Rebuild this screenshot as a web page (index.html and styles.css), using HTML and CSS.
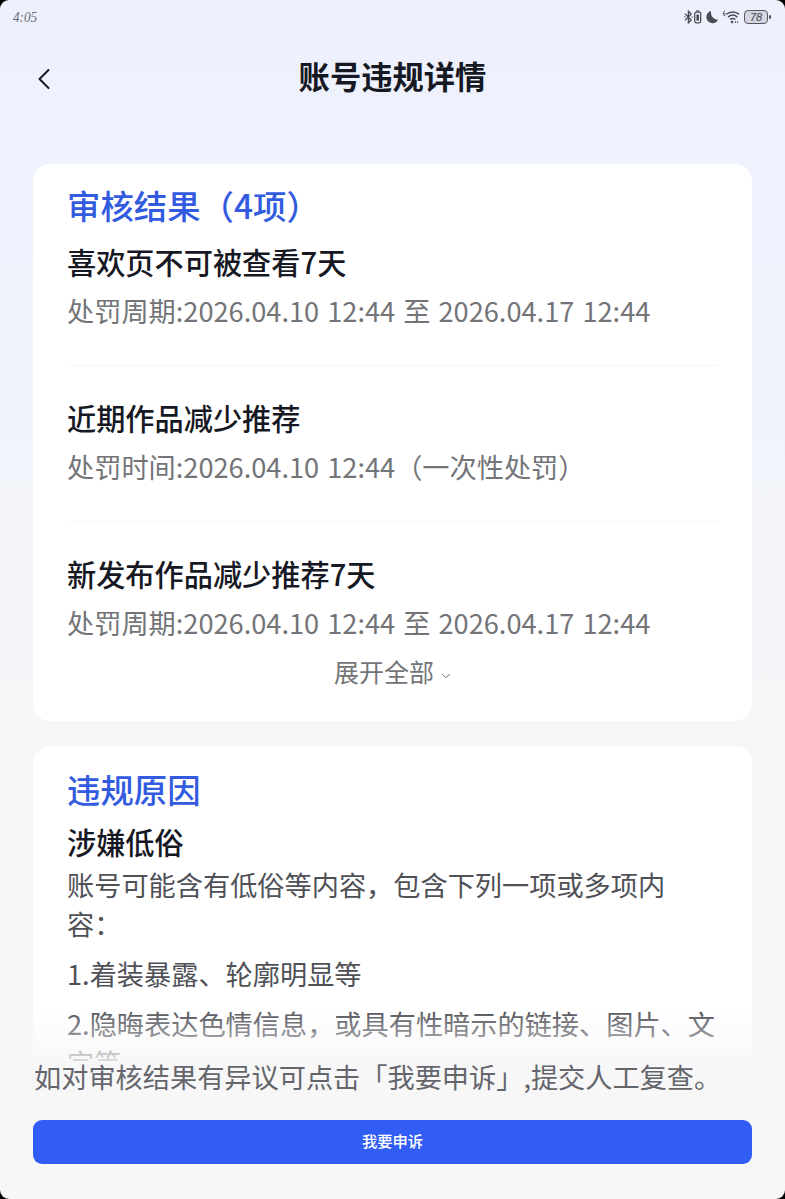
FILE: index.html
```html
<!DOCTYPE html>
<html lang="zh-CN">
  <head>
    <title>账号违规详情</title>
    <meta charset="UTF-8" />
    <link rel="stylesheet" href="styles.css">
  </head>

  <body>
    <div class="page">
      <div class="status-bar">
        <div class="time">4:05</div>
        <div class="status-icons">
          <svg class="bluetooth" width="19" height="14" viewBox="0 0 19 14">
            <path d="M1 3.6 L7.2 10 L4.4 12.8 V1.2 L7.2 4 L1 10.4" />
            <path d="M0.4 7h1M7.6 7h1" />
            <rect x="10.7" y="2.2" width="6" height="10.6" rx="1.5" />
            <path d="M12.2 1h3" />
            <rect class="fill" x="12.4" y="4.6" width="2.6" height="6" />
          </svg>
          <svg class="moon" width="13" height="14" viewBox="0 0 13 14">
            <path d="M5 1 A6.2 6.2 0 1 0 12.2 9.6 C8.2 10.2 4.2 6.2 5 1 Z" />
          </svg>
          <svg class="wifi" width="18" height="14" viewBox="0 0 18 14">
            <path d="M3.2 0.6 C1.2 1.4 0.7 5.6 2.2 5.6 C3.6 5.6 3.6 3.2 2.2 3.2 C1.6 3.2 1.2 3.6 1.1 4" stroke-width="0.9" />
            <path d="M4.2 4.3 C8 1.1 13.4 1.1 17.2 4.3M6 7.1 C8.8 4.7 12.6 4.7 15.4 7.1M8 9.5 C9.8 8.1 11.6 8.1 13.4 9.5" />
            <circle cx="10" cy="12" r="1.3" />
            <path d="M12.8 12h1.2M15 12h1.2" />
          </svg>
          <div class="battery">78</div>
          <div class="battery-tip"></div>
        </div>
      </div>

      <div class="header">
        <svg class="back" width="14" height="22" viewBox="0 0 14 22">
          <path d="M11.5 2 L2.5 11 L11.5 20" />
        </svg>
        <h1 class="title">账号违规详情</h1>
      </div>

      <div class="content">
        <div class="card result">
          <h2 class="card-title">审核结果（4项）</h2>
          <div class="item">
            <div class="item-title">喜欢页不可被查看7天</div>
            <div class="item-time">处罚周期:2026.04.10 12:44 至 2026.04.17 12:44</div>
          </div>
          <div class="item">
            <div class="item-title">近期作品减少推荐</div>
            <div class="item-time">处罚时间:2026.04.10 12:44（一次性处罚）</div>
          </div>
          <div class="item">
            <div class="item-title">新发布作品减少推荐7天</div>
            <div class="item-time">处罚周期:2026.04.10 12:44 至 2026.04.17 12:44</div>
          </div>
          <div class="expand">
            <span>展开全部</span>
            <svg width="10" height="6" viewBox="0 0 10 6">
              <path d="M1 1 L5 4.6 L9 1" />
            </svg>
          </div>
        </div>

        <div class="card reason">
          <h2 class="card-title">违规原因</h2>
          <div class="item-title">涉嫌低俗</div>
          <p>账号可能含有低俗等内容，包含下列一项或多项内容：</p>
          <p>1.着装暴露、轮廓明显等</p>
          <p>2.隐晦表达色情信息，或具有性暗示的链接、图片、文字等</p>
        </div>
      </div>

      <div class="footer">
        <div class="tip">如对审核结果有异议可点击「我要申诉」,提交人工复查。</div>
        <button class="appeal">我要申诉</button>
      </div>
    </div>
  </body>
</html>
```

FILE: styles.css
```css
* {
  box-sizing: border-box;
  margin: 0;
  padding: 0;
}

body {
  background: #000;
  font-family: "Noto Sans CJK SC", sans-serif;
  color: #161823;
}

svg {
  fill: none;
  stroke: #4a4c54;
  flex: none;
}

.page {
  height: 1199px;
  display: flex;
  flex-direction: column;
  border-radius: 9px;
  overflow: hidden;
  background: linear-gradient(#eef1fd 0, #eff3fc 380px, #f4f5f9 560px, #f7f7f8 820px);
}

.status-bar {
  height: 34px;
  padding: 0 14px 1px 13px;
  display: flex;
  align-items: center;
  justify-content: space-between;
}

.time {
  font: italic 15px/18px "Liberation Serif", serif;
  color: #6b6d76;
  transform: scaleX(0.88);
  transform-origin: left;
}

.status-icons {
  display: flex;
  align-items: center;
}

.bluetooth {
  stroke-width: 1.3;
}

.fill,
.moon path,
.wifi circle {
  fill: #4a4c54;
  stroke: none;
}

.moon {
  margin-left: 3px;
}

.wifi {
  margin-left: 3px;
  stroke-width: 1.5;
}

.battery {
  width: 24px;
  height: 14px;
  margin-left: 4px;
  border: 1px solid #55575f;
  border-radius: 4px;
  background: #d3d6e0;
  font: italic 11px/12px "Liberation Sans", sans-serif;
  text-align: center;
  color: #44464d;
}

.battery-tip {
  width: 2px;
  height: 4px;
  margin-left: 1px;
  border-radius: 1px;
  background: #55575f;
}

.header {
  height: 130px;
  padding: 20px 35px 0 37px;
  display: flex;
  align-items: flex-start;
}

.back {
  margin-top: 14px;
  stroke: #161823;
  stroke-width: 2;
  stroke-linecap: round;
  stroke-linejoin: round;
}

.title {
  flex: 1;
  padding-right: 16px;
  font-size: 31.3px;
  line-height: 44px;
  font-weight: 700;
  text-align: center;
}

.content {
  height: 897px;
  padding: 0 33px;
  overflow: hidden;
}

.card {
  padding: 0 34px;
  border-radius: 17px;
  background: #fff;
}

.result {
  height: 557px;
  padding-top: 16px;
  margin-bottom: 25px;
}

.card-title {
  font-size: 33.4px;
  line-height: 50px;
  font-weight: 500;
  color: #325be0;
}

.item {
  height: 156px;
  padding-top: 30px;
  border-bottom: 1px solid #f6f6f7;
}

.item:nth-of-type(1) {
  height: 136px;
  padding-top: 10px;
}

.item:nth-of-type(3) {
  height: 124px;
  border-bottom: 0;
}

.item-title {
  font-size: 29.2px;
  line-height: 42px;
  font-weight: 500;
}

.item-time {
  margin-top: 3px;
  font-size: 27.2px;
  line-height: 50px;
  word-spacing: 2px;
  color: #737478;
  white-space: nowrap;
}

.expand {
  display: flex;
  justify-content: center;
  align-items: center;
  gap: 7px;
  font-size: 25px;
  line-height: 50px;
  color: #737478;
}

.expand svg {
  margin-top: 9px;
  stroke: #737478;
}

.reason {
  height: 400px;
  padding-top: 18px;
}

.reason .item-title {
  margin-top: 6px;
  margin-bottom: 3px;
}

.reason p {
  margin-bottom: 11px;
  font-size: 27.2px;
  line-height: 39px;
  color: #505157;
}

.footer {
  position: relative;
  flex: 1;
  padding: 0 33px;
}

/* fades the scrolled text out above the footer */
.footer::before {
  content: "";
  position: absolute;
  left: 0;
  right: 0;
  top: -52px;
  height: 52px;
  background: linear-gradient(rgba(247, 247, 248, 0), rgba(247, 247, 248, 0.82));
}

.tip {
  height: 59px;
  padding-left: 1px;
  font-size: 27.2px;
  line-height: 30px;
  color: #65666c;
  white-space: nowrap;
}

.appeal {
  display: block;
  width: 100%;
  height: 44px;
  padding-bottom: 4px;
  border: 0;
  border-radius: 9px;
  background: #315df5;
  font-family: inherit;
  font-size: 15.3px;
  font-weight: 500;
  color: #fff;
}
```
